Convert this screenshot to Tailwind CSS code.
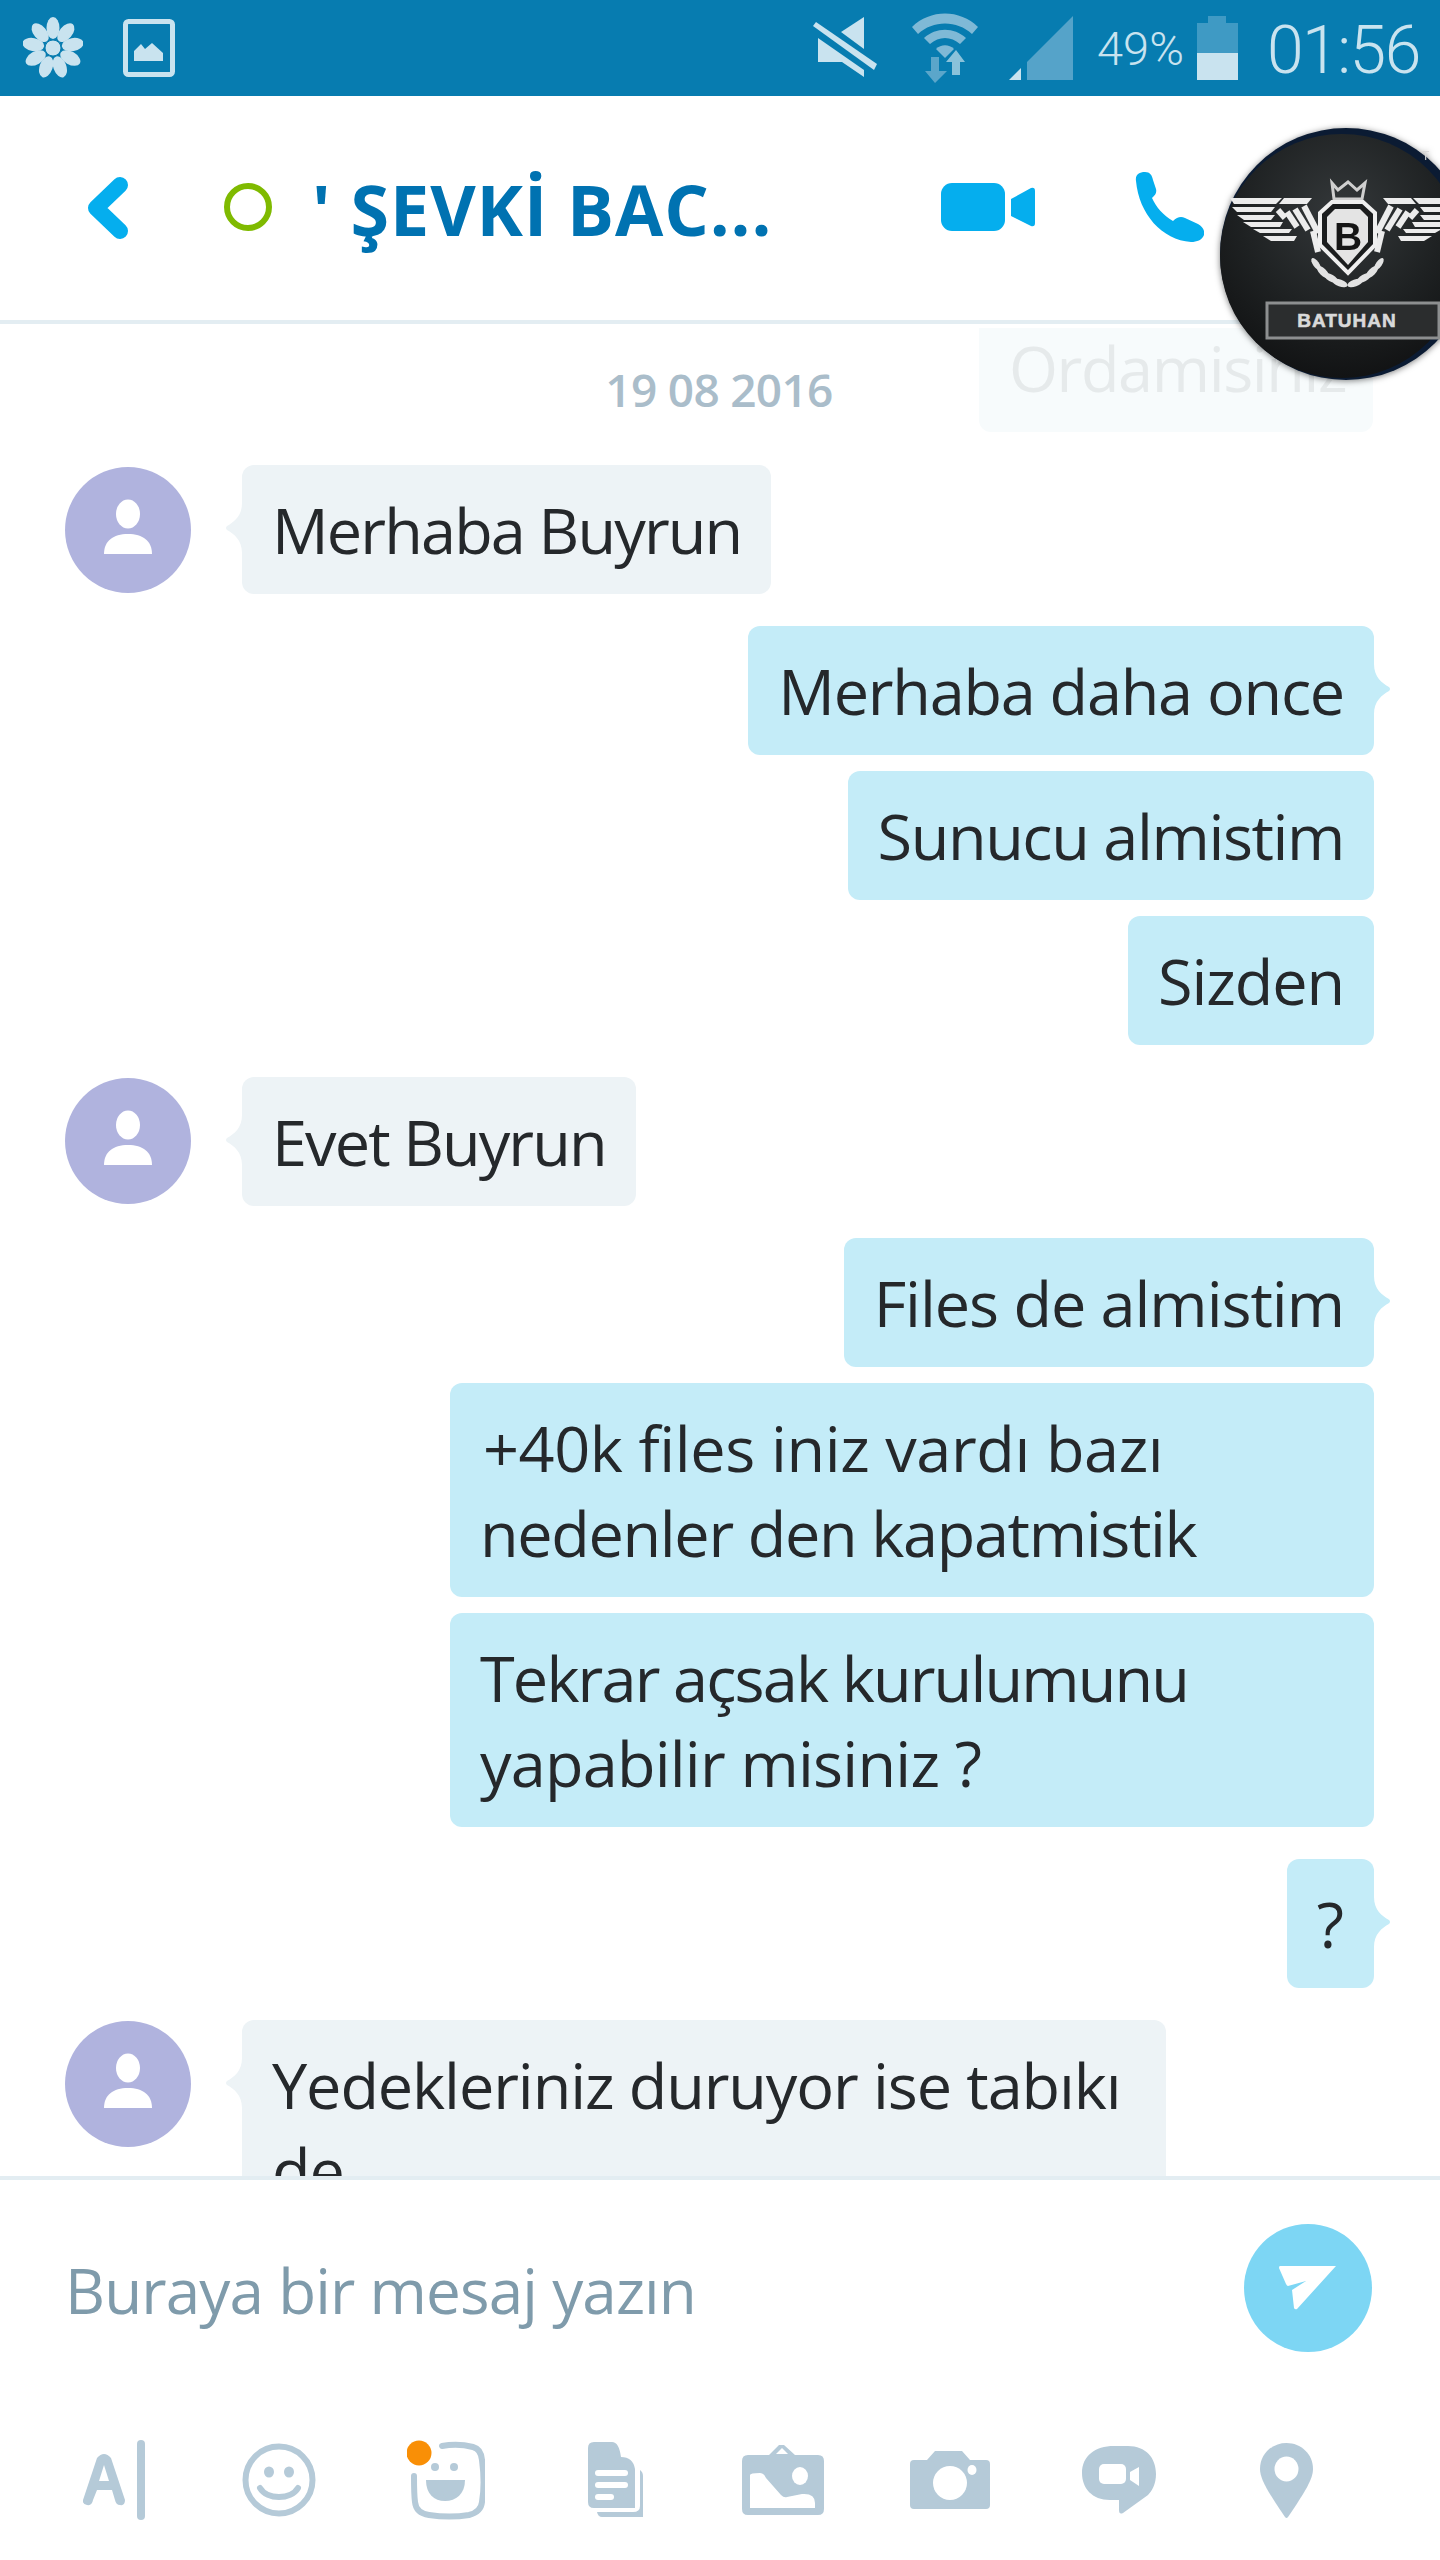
<!DOCTYPE html>
<html lang="en">
<head>
    <meta charset="UTF-8">
    <meta name="viewport" content="width=device-width, initial-scale=1.0">
    <title>Chat</title>
    <script src="https://cdn.jsdelivr.net/npm/@tailwindcss/browser@4"></script>
</head>
<body class="bg-white">
<div class="relative w-[1440px] h-[2560px] flex flex-col overflow-hidden bg-white font-['Open_Sans',sans-serif]">

    <!-- Status bar -->
    <div class="h-[96px] shrink-0 bg-[#077cb0] flex items-center text-[#c9e3ef]">
        <svg class="ml-[23px] w-[60px] h-[62px]" viewBox="0 0 60 62" fill="#c9e3ef">
            <g>
                <ellipse cx="30" cy="11" rx="6.5" ry="11"/>
                <ellipse cx="30" cy="11" rx="6.5" ry="11" transform="rotate(40 30 31)"/>
                <ellipse cx="30" cy="11" rx="6.5" ry="11" transform="rotate(80 30 31)"/>
                <ellipse cx="30" cy="11" rx="6.5" ry="11" transform="rotate(120 30 31)"/>
                <ellipse cx="30" cy="11" rx="6.5" ry="11" transform="rotate(160 30 31)"/>
                <ellipse cx="30" cy="11" rx="6.5" ry="11" transform="rotate(200 30 31)"/>
                <ellipse cx="30" cy="11" rx="6.5" ry="11" transform="rotate(240 30 31)"/>
                <ellipse cx="30" cy="11" rx="6.5" ry="11" transform="rotate(280 30 31)"/>
                <ellipse cx="30" cy="11" rx="6.5" ry="11" transform="rotate(320 30 31)"/>
            </g>
            <circle cx="30" cy="31" r="8" fill="#c9e3ef" stroke="#077cb0" stroke-width="1"/>
        </svg>
        <svg class="ml-[40px] w-[52px] h-[58px]" viewBox="0 0 52 58">
            <rect x="2.5" y="2.5" width="47" height="53" rx="3" fill="none" stroke="#c9e3ef" stroke-width="5"/>
            <path d="M11 42V32L18 25L22 30L29 24L40 34V42Z" fill="#c9e3ef"/>
        </svg>

        <svg class="ml-[638px] w-[65px] h-[62px]" viewBox="0 0 65 62" fill="#c9e3ef">
            <path d="M28 15L51 0V32Z"/>
            <path d="M5 21L51 53V60L29 45H5Z"/>
            <path d="M0 9L3 5L64 47L61 53Z"/>
        </svg>
        <svg class="ml-[34px] w-[66px] h-[70px]" viewBox="0 0 66 70" fill="#7fb9d6">
            <path d="M0 14C18 -4 48 -4 66 14L60 21C45 7 21 7 6 21Z"/>
            <path d="M12 25C24 14 42 14 54 25L48 31C39 23 27 23 18 31Z"/>
            <path d="M24 36C29 31 37 31 42 36L33 45Z"/>
            <path d="M19 44H27V58H35L23 70L13 58H19Z" fill="#5ba6ca"/>
            <path d="M40 62H48V49H53L44 37L34 49H40Z" fill="#8ac2da"/>
        </svg>
        <svg class="ml-[31px] w-[65px] h-[64px]" viewBox="0 0 65 64">
            <path d="M64 0V64H18V46Z" fill="#55a3c9"/>
            <path d="M0 64L12 52V64Z" fill="#c9e3ef"/>
        </svg>
        <span class="ml-[23px] w-[87px] text-[47px] leading-none font-['Roboto',sans-serif] font-light whitespace-nowrap">49%</span>
        <svg class="ml-[13px] w-[41px] h-[64px]" viewBox="0 0 41 64">
            <path d="M11 0H29V7H41V37H0V7H11Z" fill="#3f9ac4"/>
            <rect y="37" width="41" height="27" fill="#c9e3ef"/>
        </svg>
        <span class="ml-[29px] mt-[5px] text-[66px] leading-none font-['Roboto',sans-serif] font-light tracking-[-1.5px] whitespace-nowrap">01:56</span>
    </div>

    <!-- Header -->
    <div class="h-[228px] shrink-0 border-b-4 border-[#e3edf2] flex items-center pb-[3px]">
        <svg class="ml-[87px] mt-[2px] w-[42px] h-[64px]" viewBox="0 0 42 64" fill="none">
            <path d="M33 9L9 32L33 55" stroke="#05aeee" stroke-width="16" stroke-linecap="round" stroke-linejoin="round"/>
        </svg>
        <span class="ml-[95px] w-[48px] h-[48px] rounded-full border-[6px] border-[#7fba00]"></span>
        <span class="ml-[40px] mt-[4px] w-[482px] text-[70px] leading-none font-bold text-[#0072b1] whitespace-nowrap tracking-[0.9px]">' ŞEVKİ BAC...</span>
        <svg class="ml-[147px] w-[94px] h-[48px]" viewBox="0 0 94 48" fill="#05aeee">
            <rect width="64" height="48" rx="11"/>
            <path d="M70 16L90 5Q94 4 94 8V40Q94 44 90 43L70 33Z"/>
        </svg>
        <svg class="ml-[100px] w-[69px] h-[70px]" viewBox="0 0 69 70" fill="#05aeee">
            <path d="M1 9C0 3 4 0 10 0C15 0 17 3 18 8L21 17C22 21 20 23 17 26C21 35 28 43 38 49C42 45 46 44 50 46L63 52C68 55 70 59 69 63C67 68 62 70 56 70C27 68 4 42 1 9Z"/>
        </svg>
    </div>

    <!-- Messages -->
    <div class="relative flex-1 min-h-0 overflow-hidden flex flex-col pt-[39px] text-[63px] leading-[85px] text-[#25282b]">
        <div class="text-center text-[46px] leading-[52px] font-semibold text-[#aabdca] tracking-[-0.7px] pr-[2px]">19 08 2016</div>

        <div class="mt-[50px] flex items-start pl-[65px] gap-[51px]">
            <svg class="mt-[2px] w-[126px] h-[126px] shrink-0" viewBox="0 0 126 126">
                <circle cx="63" cy="63" r="63" fill="#b0b3de"/>
                <ellipse cx="63" cy="47" rx="12" ry="14.5" fill="#fff"/>
                <path d="M39 87C39 74 48 67 63 67C78 67 87 74 87 87Z" fill="#fff"/>
            </svg>
            <div class="relative px-[30px] py-[22px] rounded-[12px] bg-[#edf3f6] whitespace-nowrap tracking-[-1.85px]">
                Merhaba Buyrun
                <svg class="absolute left-[-16px] top-[38px] w-[16px] h-[50px]" viewBox="0 0 16 50" fill="#edf3f6"><path d="M16 0C16 13 8 19 1 23Q-1 25 1 27C8 31 16 37 16 50Z"/></svg>
            </div>
        </div>

        <div class="mt-[32px] flex flex-col items-end gap-[16px] pr-[66px]">
            <div class="relative px-[30px] py-[22px] rounded-[12px] bg-[#c4ecf8] whitespace-nowrap tracking-[-1.25px]">
                Merhaba daha once
                <svg class="absolute right-[-16px] top-[38px] w-[16px] h-[50px]" viewBox="0 0 16 50" fill="#c4ecf8"><path d="M0 0C0 13 8 19 15 23Q17 25 15 27C8 31 0 37 0 50Z"/></svg>
            </div>
            <div class="px-[30px] py-[22px] rounded-[12px] bg-[#c4ecf8] whitespace-nowrap tracking-[-1.4px]">Sunucu almistim</div>
            <div class="px-[30px] py-[22px] rounded-[12px] bg-[#c4ecf8] whitespace-nowrap tracking-[-1.1px]">Sizden</div>
        </div>

        <div class="mt-[32px] flex items-start pl-[65px] gap-[51px]">
            <svg class="mt-[1px] w-[126px] h-[126px] shrink-0" viewBox="0 0 126 126">
                <circle cx="63" cy="63" r="63" fill="#b0b3de"/>
                <ellipse cx="63" cy="47" rx="12" ry="14.5" fill="#fff"/>
                <path d="M39 87C39 74 48 67 63 67C78 67 87 74 87 87Z" fill="#fff"/>
            </svg>
            <div class="relative px-[30px] py-[22px] rounded-[12px] bg-[#edf3f6] whitespace-nowrap tracking-[-1.9px]">
                Evet Buyrun
                <svg class="absolute left-[-16px] top-[38px] w-[16px] h-[50px]" viewBox="0 0 16 50" fill="#edf3f6"><path d="M16 0C16 13 8 19 1 23Q-1 25 1 27C8 31 16 37 16 50Z"/></svg>
            </div>
        </div>

        <div class="mt-[32px] flex flex-col items-end gap-[16px] pr-[66px]">
            <div class="relative px-[30px] py-[22px] rounded-[12px] bg-[#c4ecf8] whitespace-nowrap tracking-[-1.05px]">
                Files de almistim
                <svg class="absolute right-[-16px] top-[38px] w-[16px] h-[50px]" viewBox="0 0 16 50" fill="#c4ecf8"><path d="M0 0C0 13 8 19 15 23Q17 25 15 27C8 31 0 37 0 50Z"/></svg>
            </div>
            <div class="w-[924px] px-[30px] py-[22px] rounded-[12px] bg-[#c4ecf8] whitespace-nowrap">
                <div class="tracking-[-0.4px] pl-[3px]">+40k files iniz vardı bazı</div>
                <div class="tracking-[-1.35px]">nedenler den kapatmistik</div>
            </div>
            <div class="w-[924px] px-[30px] py-[22px] rounded-[12px] bg-[#c4ecf8] whitespace-nowrap">
                <div class="tracking-[-1.85px]">Tekrar açsak kurulumunu</div>
                <div class="tracking-[-0.8px]">yapabilir misiniz ?</div>
            </div>
        </div>

        <div class="mt-[32px] flex justify-end pr-[66px]">
            <div class="relative px-[30px] py-[22px] rounded-[12px] bg-[#c4ecf8]">
                ?
                <svg class="absolute right-[-16px] top-[38px] w-[16px] h-[50px]" viewBox="0 0 16 50" fill="#c4ecf8"><path d="M0 0C0 13 8 19 15 23Q17 25 15 27C8 31 0 37 0 50Z"/></svg>
            </div>
        </div>

        <div class="mt-[32px] flex items-start pl-[65px] gap-[51px]">
            <svg class="mt-[1px] w-[126px] h-[126px] shrink-0" viewBox="0 0 126 126">
                <circle cx="63" cy="63" r="63" fill="#b0b3de"/>
                <ellipse cx="63" cy="47" rx="12" ry="14.5" fill="#fff"/>
                <path d="M39 87C39 74 48 67 63 67C78 67 87 74 87 87Z" fill="#fff"/>
            </svg>
            <div class="relative w-[924px] px-[30px] py-[22px] rounded-[12px] bg-[#edf3f6] whitespace-nowrap tracking-[-1.1px]">
                Yedekleriniz duruyor ise tabıkı<br>de
                <svg class="absolute left-[-16px] top-[38px] w-[16px] h-[50px]" viewBox="0 0 16 50" fill="#edf3f6"><path d="M16 0C16 13 8 19 1 23Q-1 25 1 27C8 31 16 37 16 50Z"/></svg>
            </div>
        </div>

        <!-- Fading previous message over the list -->
        <div class="absolute left-[979px] top-[4px] w-[394px] h-[104px] rounded-b-[12px] bg-[#f7fbfc] pl-[30px] text-[#e6eaeb] tracking-[-1.4px] leading-[80px] whitespace-nowrap overflow-hidden">Ordamisiniz</div>
    </div>

    <!-- Composer -->
    <div class="h-[384px] shrink-0 border-t-4 border-[#e3edf2] flex flex-col">
        <div class="h-[256px] flex items-start pt-[44px] pl-[65px] pr-[68px] justify-between">
            <span class="mt-[24px] text-[62px] leading-[85px] text-[#7f9bab] tracking-[-0.9px] whitespace-nowrap">Buraya bir mesaj yazın</span>
            <div class="w-[128px] h-[128px] rounded-full bg-[#7dd6f4] flex items-center justify-center">
                <svg class="w-[58px] h-[44px]" viewBox="0 0 58 44" fill="#fff"><path d="M1 0H57L18 43Q16 44 15 42L13 24L27 15L9 20Q8 20 7 18L0 2Q0 0 1 0Z"/></svg>
            </div>
        </div>
        <div class="grid grid-cols-[repeat(8,167px)] pl-[31px] justify-items-center items-center h-[88px]">
            <svg class="ml-[-2px] w-[62px] h-[80px]" viewBox="0 0 62 80" fill="#b5cad8">
                <path d="M0 60L14 18Q21 10 28 18L42 60Q42 66 37 65Q33 65 32 60L29 50H14L10 60Q9 66 4 65Q-1 64 0 60ZM16 41H26L21 25Z" fill-rule="evenodd"/>
                <rect x="54" y="0" width="8" height="80" rx="4"/>
            </svg>
            <svg class="ml-[-5px] w-[74px] h-[74px]" viewBox="0 0 74 74">
                <circle cx="37" cy="37" r="33.5" fill="none" stroke="#b5cad8" stroke-width="6"/>
                <ellipse cx="27" cy="29" rx="5" ry="5.5" fill="#b5cad8"/>
                <ellipse cx="47" cy="29" rx="5" ry="5.5" fill="#b5cad8"/>
                <path d="M18 45C25 57 49 57 56 45" fill="none" stroke="#b5cad8" stroke-width="6" stroke-linecap="round"/>
            </svg>
            <svg class="ml-[-6px] w-[78px] h-[80px]" viewBox="0 0 78 80">
                <path d="M35 6C45 4 55 4 66 7Q74 9 75 20C77 35 77 50 75 62Q74 72 62 75C50 77 35 77 22 75Q9 73 8 62C7 55 7 45 7 36" fill="none" stroke="#b5cad8" stroke-width="6" stroke-linecap="round"/>
                <circle cx="12" cy="13" r="12.5" fill="#f98f06"/>
                <circle cx="28" cy="27" r="4" fill="#b5cad8"/>
                <circle cx="47" cy="27" r="4" fill="#b5cad8"/>
                <path d="M19 40H58C58 54 49 61 38 61C27 61 19 54 19 40Z" fill="#b5cad8"/>
            </svg>
            <svg class="w-[55px] h-[76px]" viewBox="0 0 55 76">
                <path d="M6 0H24Q31 0 33 15Q45 15 47 27V66Q47 66 42 66H6Q0 66 0 60V6Q0 0 6 0Z" fill="#b5cad8"/>
                <path d="M52 28Q55 30 55 34V75H14Q10 75 9 70H45Q52 70 52 64Z" fill="#b5cad8"/>
                <rect x="7" y="28" width="33" height="6" rx="3" fill="#fff"/>
                <rect x="7" y="40" width="33" height="6" rx="3" fill="#fff"/>
                <rect x="7" y="52" width="19" height="6" rx="3" fill="#fff"/>
            </svg>
            <svg class="w-[82px] h-[70px]" viewBox="0 0 82 70">
                <path d="M6 10H27L37 0H42L53 10H76Q82 10 82 16V64Q82 70 76 70H6Q0 70 0 64V16Q0 10 6 10Z" fill="#b5cad8"/>
                <path d="M34 9L40 3L46 9Z" fill="#fff"/>
                <path d="M8 30Q8 28 18 28Q22 28 24 33L39 50Q42 53 45 52L60 49Q73 48 73 58V63H8Z" fill="#fff"/>
                <ellipse cx="58" cy="31" rx="8" ry="9" fill="#fff"/>
            </svg>
            <svg class="w-[80px] h-[58px]" viewBox="0 0 80 58">
                <path d="M4 9H17L25 0H52L60 9H76Q80 9 80 13V54Q80 58 76 58H4Q0 58 0 54V13Q0 9 4 9Z" fill="#b5cad8"/>
                <ellipse cx="40" cy="32" rx="17" ry="17" fill="#fff"/>
                <ellipse cx="62" cy="19" rx="4.5" ry="5" fill="#fff"/>
            </svg>
            <svg class="ml-[5px] w-[74px] h-[68px]" viewBox="0 0 74 68">
                <path d="M32 0H46C64 0 74 12 74 28C74 38 70 45 66 49L41 67Q37 69 37 64V54H28C10 54 0 42 0 27C0 10 13 0 32 0Z" fill="#b5cad8"/>
                <rect x="17" y="18" width="27" height="20" rx="5" fill="#fff"/>
                <path d="M48 26L57 21V40L48 34Z" fill="#fff"/>
            </svg>
            <svg class="ml-[5px] w-[53px] h-[75px]" viewBox="0 0 53 75">
                <path d="M26.5 0C41 0 53 11 53 26C53 36 45 49 28 74Q26.5 76 25 74C8 49 0 36 0 26C0 11 12 0 26.5 0Z" fill="#b5cad8"/>
                <ellipse cx="26.5" cy="26" rx="12" ry="12.5" fill="#fff"/>
            </svg>
        </div>
    </div>

    <!-- Floating chat head over the header -->
    <svg class="absolute left-[1220px] top-[128px] w-[252px] h-[252px] drop-shadow-[0_1px_3px_rgba(0,0,0,0.5)]" viewBox="0 0 252 252">
        <defs>
            <radialGradient id="badge" cx="50%" cy="32%" r="70%">
                <stop offset="0%" stop-color="#34383a"/>
                <stop offset="60%" stop-color="#1e2122"/>
                <stop offset="100%" stop-color="#111213"/>
            </radialGradient>
            <g id="wing" fill="#ececec">
                <path d="M10 70H62L56 76H14Z"/>
                <path d="M64 70H92L87 76H59Z"/>
                <path d="M12 79H55L51 84H17Z"/>
                <path d="M17 87H55L51 92H24Z"/>
                <path d="M23 94H63L60 99H31Z"/>
                <path d="M33 101H72L69 105H40Z"/>
                <path d="M43 108H77L74 113H51Z"/>
                <g fill="none" stroke="#ececec" stroke-width="6">
                    <path d="M58 82L65 90"/>
                    <path d="M67 84L77 99"/>
                    <path d="M75 81L88 102"/>
                    <path d="M84 78L98 105"/>
                    <path d="M93 103L98 124"/>
                </g>
            </g>
        </defs>
        <circle cx="126" cy="126" r="126" fill="#0b1b33"/>
        <circle cx="122" cy="128" r="122" fill="url(#badge)"/>
        <text x="202" y="32" font-family="Liberation Sans" font-size="12" fill="#d8d8d8">T</text>
        <use href="#wing"/>
        <use href="#wing" transform="translate(255 0) scale(-1 1)"/>
        <!-- crown -->
        <path d="M112 55L118 62L128 54L137 62L145 55L142 71H114Z" fill="none" stroke="#cfcfcf" stroke-width="3"/>
        <path d="M112 74H143L155 85V117L128 145L100 117V85Z" fill="#1b1d1e" stroke="#efefef" stroke-width="4"/>
        <path d="M115 81H140L148 89V114L128 137L107 114V89Z" fill="#e4e4e4"/>
        <text x="128" y="122" text-anchor="middle" font-family="Liberation Sans" font-weight="700" font-size="39" fill="#151515">B</text>
        <g fill="#e2e2e2">
            <ellipse cx="96" cy="136" rx="7" ry="3" transform="rotate(55 96 136)"/>
            <ellipse cx="103" cy="144" rx="8" ry="3.5" transform="rotate(45 103 144)"/>
            <ellipse cx="111" cy="150" rx="8" ry="3.5" transform="rotate(30 111 150)"/>
            <ellipse cx="120" cy="155" rx="8" ry="3.5" transform="rotate(20 120 155)"/>
            <ellipse cx="159" cy="136" rx="7" ry="3" transform="rotate(-55 159 136)"/>
            <ellipse cx="152" cy="144" rx="8" ry="3.5" transform="rotate(-45 152 144)"/>
            <ellipse cx="144" cy="150" rx="8" ry="3.5" transform="rotate(-30 144 150)"/>
            <ellipse cx="135" cy="155" rx="8" ry="3.5" transform="rotate(-20 135 155)"/>
        </g>
        <rect x="47" y="175" width="172" height="35" fill="#2b2d2e" stroke="#8d8f90" stroke-width="3"/>
        <text x="127" y="199" text-anchor="middle" font-family="Liberation Sans" font-weight="700" font-size="19" letter-spacing="1" stroke="#d9d9d9" stroke-width="0.6" fill="#d9d9d9">BATUHAN</text>
    </svg>
</div>
</body>
</html>
